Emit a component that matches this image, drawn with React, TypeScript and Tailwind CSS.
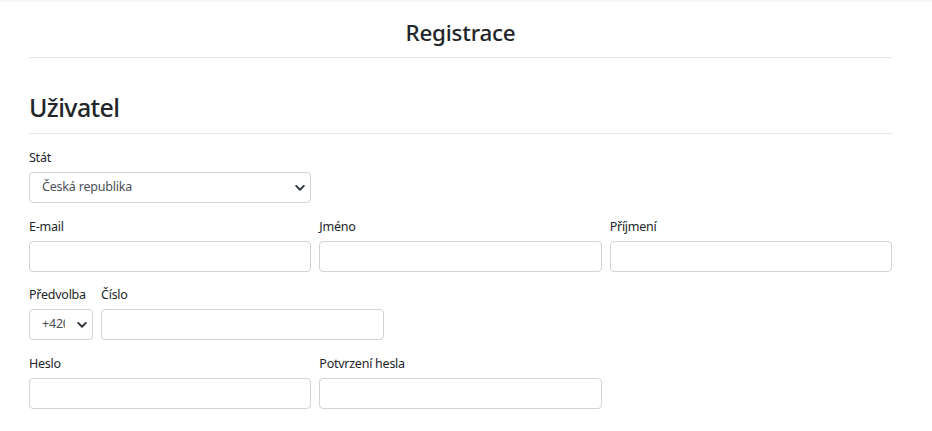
import React from "react"

const font = { fontFamily: '"Noto Sans", "Open Sans", sans-serif' }

function Chevron() {
  return (
    <svg
      className="pointer-events-none absolute right-[6px] top-1/2 -translate-y-1/2"
      width="10"
      height="7"
      viewBox="0 0 10 7"
      fill="none"
    >
      <path d="M1.2 1.4 5 5.2l3.8-3.8" stroke="#343a40" strokeWidth="2" strokeLinecap="round" strokeLinejoin="round" />
    </svg>
  )
}

function Field({ label, className, children }: { label: string; className?: string; children: React.ReactNode }) {
  return (
    <div className={className}>
      <label className="mb-[5px] block text-[12.5px] leading-[19px] tracking-[-0.25px] text-[#212529]">{label}</label>
      {children}
    </div>
  )
}

function TextInput({ type = "text" }: { type?: string }) {
  return (
    <input
      type={type}
      className="block h-[31px] w-full rounded-[4px] border border-[#ced4da] bg-white px-3 text-[13px] text-[#495057] outline-none"
    />
  )
}

function Select({ value, options, className }: { value: string; options: string[]; className?: string }) {
  return (
    <div className={"relative " + (className ?? "")}>
      <select
        defaultValue={value}
        className="block h-[31px] w-full appearance-none rounded-[4px] border border-[#ced4da] bg-white pl-3 pr-[27px] text-[12.5px] tracking-[-0.2px] text-[#495057] outline-none"
      >
        {options.map((o) => (
          <option key={o}>{o}</option>
        ))}
      </select>
      <Chevron />
    </div>
  )
}

export default function App() {
  return (
    <div className="min-h-[431px] border-t-2 border-[#f6f6f6] bg-white" style={font}>
      <div className="ml-[29px] w-[863px]">
        <div className="border-b border-[#e5e5e5] pt-[16px] pb-[10px] text-center">
          <h1 className="text-[22.4px] font-medium leading-[29px] tracking-[-0.2px] text-[#212529]">Registrace</h1>
        </div>

        <div className="mt-[32px] border-b border-[#e5e5e5] pb-[9px]">
          <h2 className="text-[25px] font-medium leading-[34px] tracking-[-0.6px] text-[#212529]">Uživatel</h2>
        </div>

        <form className="pt-[14px]">
          <div className="mb-[14px] grid grid-cols-3 gap-x-2">
            <Field label="Stát">
              <Select value="Česká republika" options={["Česká republika", "Slovenská republika"]} />
            </Field>
          </div>

          <div className="mb-[13px] grid grid-cols-3 gap-x-2">
            <Field label="E-mail">
              <TextInput />
            </Field>
            <Field label="Jméno">
              <TextInput />
            </Field>
            <Field label="Příjmení">
              <TextInput />
            </Field>
          </div>

          <div className="mb-[14px] flex gap-x-2">
            <Field label="Předvolba" className="w-[64px]">
              <Select value="+420" options={["+420", "+421"]} />
            </Field>
            <Field label="Číslo" className="w-[283px]">
              <TextInput />
            </Field>
          </div>

          <div className="grid grid-cols-3 gap-x-2">
            <Field label="Heslo">
              <TextInput type="password" />
            </Field>
            <Field label="Potvrzení hesla">
              <TextInput type="password" />
            </Field>
          </div>
        </form>
      </div>
    </div>
  )
}
